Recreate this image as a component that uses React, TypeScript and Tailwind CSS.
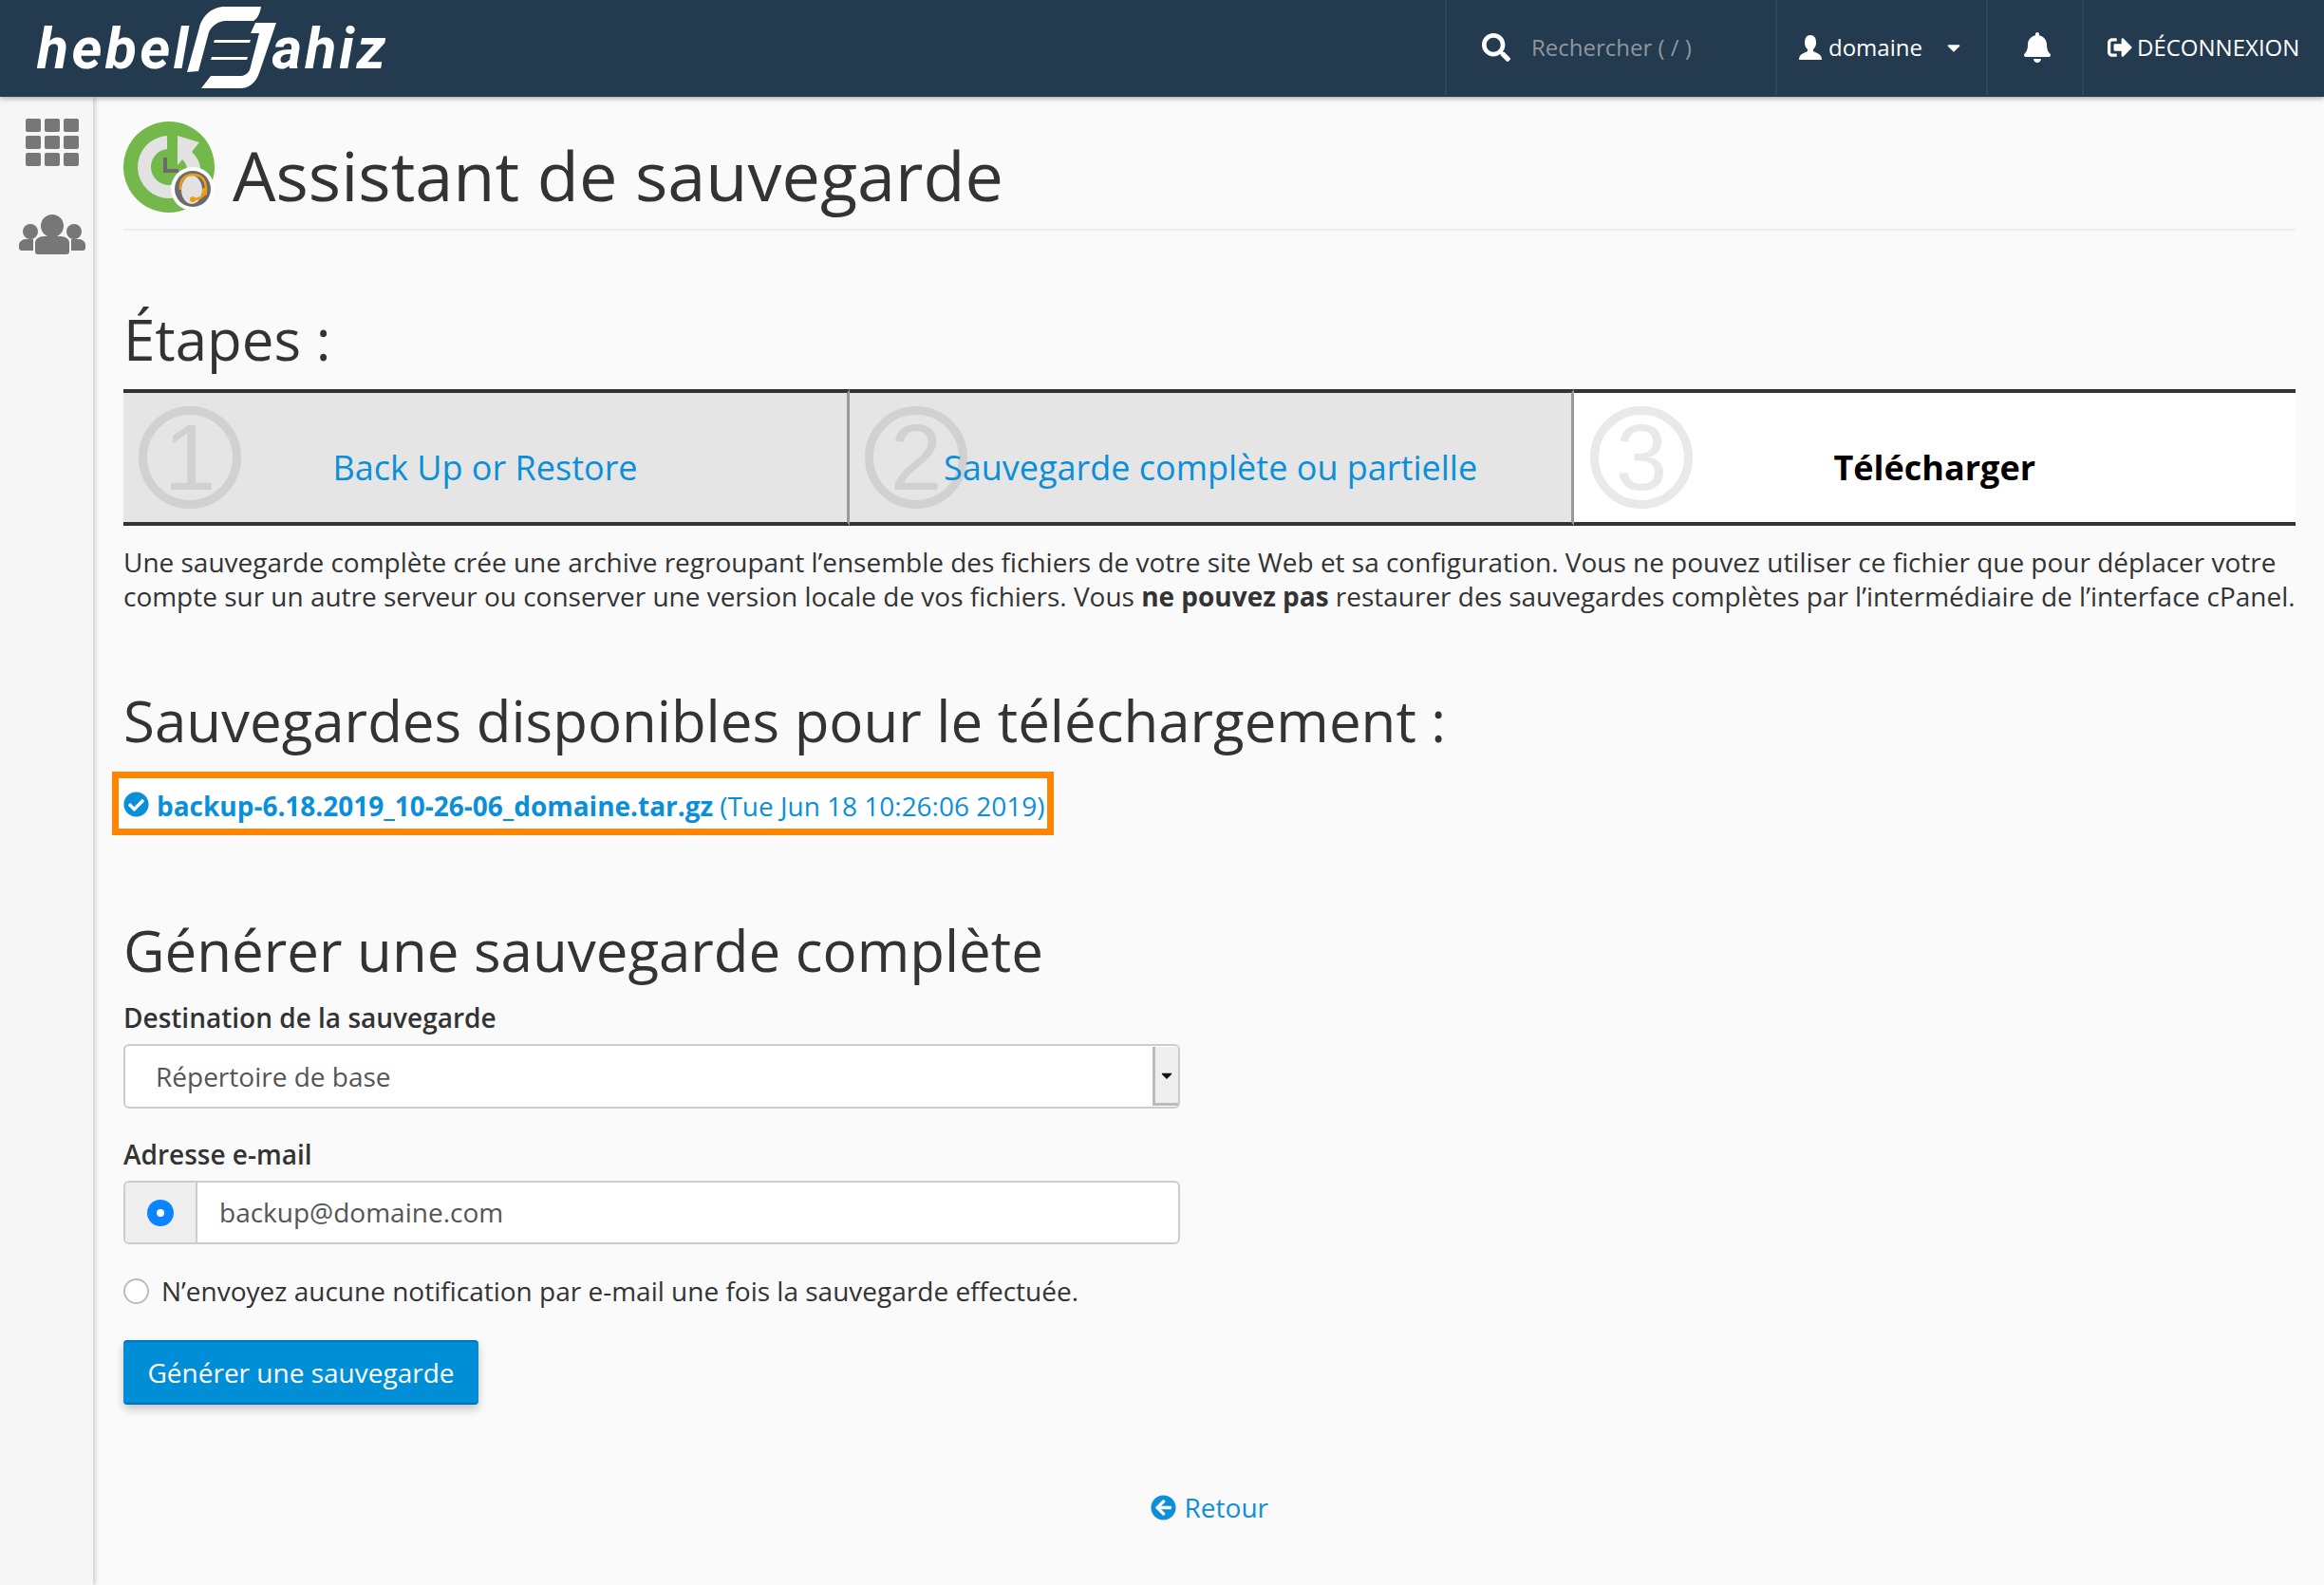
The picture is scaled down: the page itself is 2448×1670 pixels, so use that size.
import { FaSearch, FaCaretDown, FaBell, FaSignOutAlt, FaCheckCircle, FaArrowCircleLeft } from "react-icons/fa";

const Logo = () => {
  return (
    <div className="flex items-center text-white italic font-bold font-['Roboto',sans-serif] text-[61px] leading-none">
      <span className="tracking-[3.3px]">hebel</span>
      <svg className="ml-[-7px] mr-[-8px] shrink-0" width="100" height="102" viewBox="193 0 100 102" fill="#fff">
        <path d="M274 7 L236 7 C222 7 212 17 209 29 L196 76 L208 75 L219 34 C222 27 229 22 237 22 L266 22 C270 20 273 14 274 7 Z" />
        <path d="M290 24 L268 24 L263 35 L272 35 L263 70 C262 76 258 80 252 80 L221 80 L211 93 L252 93 C264 93 270 84 273 74 Z" />
        <path d="M225 42 L263 42 L262 45 L224 45 Z" />
        <path d="M222 60 L260 60 L259 63 L221 63 Z" />
      </svg>
      <span className="tracking-[3px]">ahiz</span>
    </div>
  );
};

const BackupIcon = () => {
  return (
    <svg className="shrink-0" width="100" height="98" viewBox="0 0 100 98">
      <circle cx="48" cy="48" r="48" fill="#74b84b" />
      <path d="M46 15 A33 33 0 1 0 81 48 L67 48 A19 19 0 1 1 46 29 Z" fill="#e2e2e2" />
      <path d="M57 15 L80 22 L72 32 C78 38 81 44 81 50 L67 50 C67 46 65 43 62 40 L57 46 Z" fill="#e2e2e2" />
      <path d="M44 38 L44 52 L58 52" fill="none" stroke="#6b6b6b" strokeWidth="4" />
      <circle cx="73" cy="71" r="23" fill="#fff" />
      <circle cx="73" cy="71" r="19" fill="#6b6b6b" />
      <ellipse cx="72" cy="72" rx="11" ry="15" fill="#e2e2e2" />
      <path d="M60 72 C59 60 66 56 73 56 C81 56 87 60 87 72 L85 76 C84 80 78 82 73 82" fill="none" stroke="#f39c12" strokeWidth="2.5" />
      <circle cx="73" cy="82" r="3" fill="#f39c12" />
      <rect x="83" y="70" width="5" height="8" rx="2" fill="#f39c12" />
    </svg>
  );
};

const Step = ({ num, label, active, className }: { num: string; label: string; active?: boolean; className: string }) => {
  return (
    <div className={"relative h-[144px] flex items-center justify-center border-y-4 border-[#333] " + className}>
      <div className={active ? "absolute left-[17px] top-[14px] w-[108px] h-[108px] rounded-full border-[9px] border-[#e9e9e9] flex items-center justify-center text-[#e9e9e9] text-[98px] font-['Liberation_Sans',sans-serif]" : "absolute left-[16px] top-[14px] w-[108px] h-[108px] rounded-full border-[9px] border-[#d1d1d1] flex items-center justify-center text-[#d1d1d1] text-[98px] font-['Liberation_Sans',sans-serif]"}>
        {num}
      </div>
      {active ? (
        <span className="relative font-bold text-black text-[36px] mt-[21px]">{label}</span>
      ) : (
        <a className="relative text-[#0a8fd8] text-[36px] mt-[21px]">{label}</a>
      )}
    </div>
  );
};

export default function App() {
  return (
    <div className="relative w-[2448px] h-[1670px] overflow-hidden bg-[#fafafa] font-['Open_Sans',sans-serif] text-[#333]">
      <header className="relative z-10 h-[102px] bg-[#233a4f] flex items-center justify-between shadow-[0_2px_5px_rgba(0,0,0,0.3)]">
        <div className="pl-[39px]">
          <Logo />
        </div>
        <div className="flex h-[100px] self-start text-white text-[24px]">
          <div className="w-[348px] border-l-2 border-[#2f4759] flex items-center pl-[37px] gap-[22px]">
            <FaSearch className="text-[30px]" />
            <span className="text-[#8f979d]">Rechercher ( / )</span>
          </div>
          <div className="w-[222px] border-l-2 border-[#2f4759] flex items-center pl-[23px]">
            <svg className="mr-[7px] shrink-0" width="24" height="26" viewBox="0 0 24 26" fill="#fff">
              <path d="M12 0 C16 0 18 3 18 8 C18 11 17 13 15 15 L15 17 C19 19 24 20 24 26 L0 26 C0 20 5 19 9 17 L9 15 C7 13 6 11 6 8 C6 3 8 0 12 0 Z" />
            </svg>
            <span>domaine</span>
            <FaCaretDown className="text-[22px] ml-[22px]" />
          </div>
          <div className="w-[101px] border-l-2 border-[#2f4759] flex items-center pl-[36px]">
            <FaBell className="text-[32px]" />
          </div>
          <div className="w-[255px] border-l-2 border-[#2f4759] flex items-center pl-[25px] gap-[5px]">
            <FaSignOutAlt className="text-[26px]" />
            <span>DÉCONNEXION</span>
          </div>
        </div>
      </header>

      <div className="flex h-[1568px]">
        <aside className="w-[98px] shrink-0 bg-[#f6f6f6] shadow-[2px_0_5px_rgba(0,0,0,0.2)] flex flex-col pt-[23px] gap-[51px]">
          <svg className="ml-[27px]" width="56" height="50" viewBox="0 0 56 50" fill="#777">
            <rect x="0" y="0" width="16" height="14" rx="2" />
            <rect x="20" y="0" width="16" height="14" rx="2" />
            <rect x="40" y="0" width="16" height="14" rx="2" />
            <rect x="0" y="18" width="16" height="14" rx="2" />
            <rect x="20" y="18" width="16" height="14" rx="2" />
            <rect x="40" y="18" width="16" height="14" rx="2" />
            <rect x="0" y="36" width="16" height="14" rx="2" />
            <rect x="20" y="36" width="16" height="14" rx="2" />
            <rect x="40" y="36" width="16" height="14" rx="2" />
          </svg>
          <svg className="ml-[20px]" width="70" height="42" viewBox="0 0 70 42" fill="#777">
            <circle cx="35" cy="12" r="12" />
            <circle cx="12" cy="18" r="8" />
            <circle cx="58" cy="18" r="8" />
            <path d="M0 32 C0 29 3 26 7 26 L15 26 L15 38 L3 38 C1 38 0 37 0 35 Z" />
            <path d="M55 26 L63 26 C67 26 70 29 70 32 L70 35 C70 37 69 38 67 38 L55 38 Z" />
            <path d="M17 30 C17 26 21 23 26 23 L44 23 C49 23 53 26 53 30 L53 39 C53 41 52 42 50 42 L20 42 C18 42 17 41 17 39 Z" />
          </svg>
        </aside>

        <main className="flex-1 pl-[32px] pr-[31px]">
          <div className="flex items-start gap-[15px] pt-[26px] h-[141px] border-b-2 border-[#eeeeee]">
            <BackupIcon />
            <h1 className="text-[72px] leading-none mt-[20px]">Assistant de sauvegarde</h1>
          </div>

          <h2 className="text-[60px] leading-[76px] mt-[76px]">Étapes :</h2>
          <div className="flex mt-[15px]">
            <Step num="1" label="Back Up or Restore" className="w-[765px] bg-[#e5e5e5] border-r-[3px] border-r-[#999]" />
            <Step num="2" label="Sauvegarde complète ou partielle" className="w-[763px] bg-[#e5e5e5] border-r-[3px] border-r-[#999]" />
            <Step num="3" label="Télécharger" active className="flex-1 bg-white" />
          </div>

          <p className="text-[27.98px] leading-[36px] mt-[20px] whitespace-nowrap">
            Une sauvegarde complète crée une archive regroupant l’ensemble des fichiers de votre site Web et sa configuration. Vous ne pouvez utiliser ce fichier que pour déplacer votre
            <br />
            compte sur un autre serveur ou conserver une version locale de vos fichiers. Vous <b>ne pouvez pas</b> restaurer des sauvegardes complètes par l’intermédiaire de l’interface cPanel.
          </p>

          <h2 className="text-[60px] leading-[76px] mt-[75px]">Sauvegardes disponibles pour le téléchargement :</h2>
          <div className="ml-[-12px] mt-[16px] w-[992px] h-[67px] border-[7px] border-[#ff8500] bg-white flex items-center pl-[5px] pt-[7px] text-[#0a8fd8] text-[27.98px]">
            <FaCheckCircle className="text-[27px] mr-[8px] shrink-0 mt-[-6px]" />
            <b>backup-6.18.2019_10-26-06_domaine.tar.gz</b>
            <span className="ml-[7px]">(Tue Jun 18 10:26:06 2019)</span>
          </div>

          <h2 className="text-[60px] leading-[76px] mt-[83px]">Générer une sauvegarde complète</h2>
          <div className="text-[28px] font-semibold leading-[36px] mt-[15px]">Destination de la sauvegarde</div>
          <div className="w-[1113px] h-[68px] mt-[10px] bg-white border-2 border-[#cccccc] rounded-[6px] flex items-center justify-between pl-[32px] text-[#555] text-[28px]">
            <span>Répertoire de base</span>
            <div className="w-[27px] h-[62px] bg-[#efefef] border-l-[3px] border-[#bbb] border-b-[3px] flex items-center justify-center">
              <FaCaretDown className="text-[18px] text-[#111]" />
            </div>
          </div>
          <div className="text-[28px] font-semibold leading-[36px] mt-[30px]">Adresse e-mail</div>
          <div className="w-[1113px] h-[67px] mt-[10px] bg-white border-2 border-[#cccccc] rounded-[6px] flex items-center text-[#555] text-[28px] overflow-hidden">
            <div className="w-[76px] h-full bg-[#eeeeee] border-r-2 border-[#cccccc] flex items-center justify-center">
              <div className="w-[28px] h-[28px] rounded-full bg-[#0a84ff] flex items-center justify-center">
                <div className="w-[8px] h-[8px] rounded-full bg-white" />
              </div>
            </div>
            <span className="ml-[23px] mt-[-2px]">backup@domaine.com</span>
          </div>
          <div className="flex items-center mt-[31px] text-[28px] leading-[36px]">
            <div className="w-[27px] h-[27px] rounded-full bg-white border-2 border-[#bbbbbb] mr-[13px]" />
            <span>N’envoyez aucune notification par e-mail une fois la sauvegarde effectuée.</span>
          </div>
          <button className="w-[374px] h-[68px] mt-[34px] bg-[#008fd7] border-y-2 border-[#0072bc] rounded-[4px] text-white text-[28px] shadow-[0_5px_10px_rgba(0,0,0,0.2)] flex items-center justify-center">
            Générer une sauvegarde
          </button>
          <div className="flex justify-center items-center mt-[87px] text-[#0a8fd8] text-[28px]">
            <FaArrowCircleLeft className="text-[27px] mr-[9px]" />
            <span>Retour</span>
          </div>
        </main>
      </div>
    </div>
  );
}
